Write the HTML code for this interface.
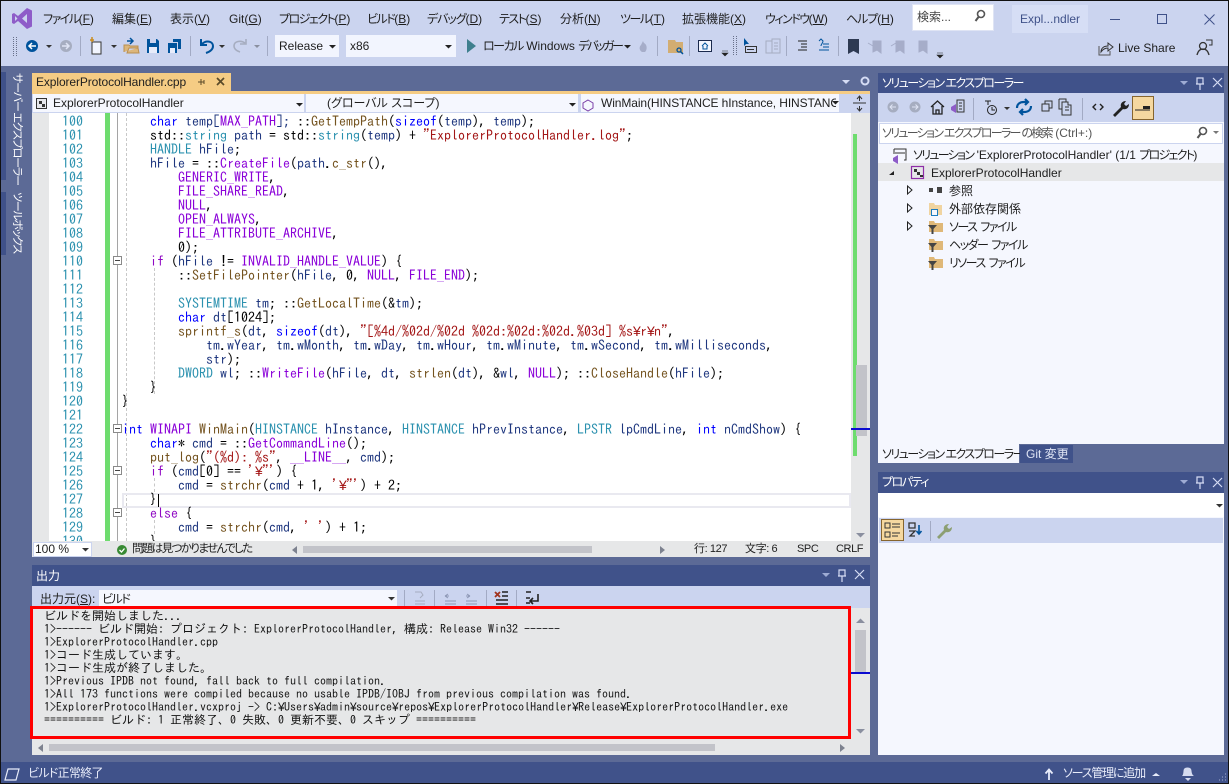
<!DOCTYPE html>
<html lang="ja"><head><meta charset="utf-8"><title>Visual Studio</title>
<style>
html,body{margin:0;padding:0}
body{width:1229px;height:784px;overflow:hidden;position:relative;background:#5c6a96;font-family:"Liberation Sans","Noto Sans CJK JP",sans-serif;font-size:12px;color:#1e1e1e;font-feature-settings:"palt"}
.a{position:absolute;white-space:nowrap}
.t{position:absolute;white-space:pre;line-height:16px;height:16px}
.m{top:11px}
.q{letter-spacing:-1.1px}
.h{letter-spacing:-1.5px}
.g{letter-spacing:-1.7px}
.code{position:absolute;left:122px;top:114px;font:14px/14px "IPAGothic",monospace;white-space:pre;color:#1f377f;font-feature-settings:normal}
.num{position:absolute;left:50px;width:33px;top:114px;text-align:right;font:14px/14px "IPAGothic",monospace;white-space:pre;color:#2b91af}
.k{color:#0000ff}.c{color:#2b91af}.f{color:#74531f}.p{color:#8a00d8}.s{color:#a31515}.x{color:#8f08c4}.d{color:#1e1e1e}.b{color:#000}
.out{position:absolute;left:44px;top:610px;font:12px/13px "IPAGothic",monospace;white-space:pre;color:#111;font-feature-settings:normal}
.y{font-family:"Liberation Sans",sans-serif;letter-spacing:-.056em}
.w{color:#fff}
.r{transform:rotate(90deg);transform-origin:0 0}
.st{font-size:11px;letter-spacing:-.4px}
</style></head><body>

<!-- top chrome -->
<div class="a" style="left:0;top:0;width:1229px;height:66px;background:#cbd4ef"></div>
<div class="t m" style="left:43px"><span class="h">ファイル</span>(<u>F</u>)</div>
<div class="t m" style="left:112px">編集(<u>E</u>)</div>
<div class="t m" style="left:170px">表示(<u>V</u>)</div>
<div class="t m" style="left:229px">Git(<u>G</u>)</div>
<div class="t m" style="left:279px"><span class="h">プロジェクト</span>(<u>P</u>)</div>
<div class="t m" style="left:367px"><span class="h">ビルド</span>(<u>B</u>)</div>
<div class="t m" style="left:427px"><span class="q">デバッグ</span>(<u>D</u>)</div>
<div class="t m" style="left:499px"><span class="h">テスト</span>(<u>S</u>)</div>
<div class="t m" style="left:560px">分析(<u>N</u>)</div>
<div class="t m" style="left:620px"><span class="h">ツール</span>(<u>T</u>)</div>
<div class="t m" style="left:682px">拡張機能(<u>X</u>)</div>
<div class="t m" style="left:765px"><span class="h">ウィンドウ</span>(<u>W</u>)</div>
<div class="t m" style="left:846px"><span class="q">ヘルプ</span>(<u>H</u>)</div>
<div class="a" style="left:912px;top:4px;width:80px;height:25px;background:#fff;border:1px solid #dfe4f4"></div>
<div class="t" style="left:917px;top:9px;color:#444">検索...</div>
<div class="a" style="left:1012px;top:5px;width:76px;height:28px;background:#d6def5"></div>
<div class="t" style="left:1020px;top:11px;color:#3f5189">Expl...ndler</div>

<!-- combos -->
<div class="a" style="left:275px;top:35px;width:64px;height:22px;background:#f2f5fe"></div>
<div class="t" style="left:279px;top:38px">Release</div>
<div class="a" style="left:346px;top:35px;width:110px;height:22px;background:#f2f5fe"></div>
<div class="t" style="left:350px;top:38px">x86</div>
<div class="t" style="left:483px;top:38px"><span class="h">ローカル</span> Windows <span style="letter-spacing:-2.400px">デバッガー</span></div>
<div class="t" style="left:1118px;top:40px">Live Share</div>

<!-- left vertical tabs -->
<div class="a" style="left:1px;top:72px;width:5px;height:108px;background:#3f5189"></div>
<div class="a" style="left:1px;top:192px;width:5px;height:63px;background:#3f5189"></div>
<div class="t w r" style="left:25px;top:73px;font-size:11px;letter-spacing:-1.200px">サーバー エクスプローラー</div>
<div class="t w r" style="left:25px;top:192px;font-size:11px;letter-spacing:-1.300px">ツールボックス</div>

<!-- doc tab -->
<div class="a" style="left:32px;top:73px;width:199px;height:18px;background:#f5cc84"></div>
<div class="t" style="left:36px;top:74px;letter-spacing:-.1px">ExplorerProtocolHandler.cpp</div>
<div class="a" style="left:32px;top:91px;width:838px;height:3px;background:#f5cc84"></div>

<!-- nav bar -->
<div class="a" style="left:32px;top:94px;width:838px;height:19px;background:#cbd4ef"></div>
<div class="a" style="left:33px;top:94px;width:271px;height:18px;background:#f5f7fe"></div>
<div class="a" style="left:306px;top:94px;width:272px;height:18px;background:#f5f7fe"></div>
<div class="a" style="left:581px;top:94px;width:258px;height:18px;background:#f5f7fe;overflow:hidden"></div>
<div class="t" style="left:53px;top:95px">ExplorerProtocolHandler</div>
<div class="t" style="left:327px;top:95px">(グローバル スコープ)</div>
<div class="a" style="left:601px;top:95px;width:235px;height:16px;overflow:hidden;white-space:pre;line-height:16px;letter-spacing:-.1px">WinMain(HINSTANCE hInstance, HINSTANCE hPrevInstance</div>

<!-- editor -->
<div class="a" style="left:32px;top:113px;width:838px;height:428px;background:#fff;overflow:hidden"></div>
<div class="a" style="left:32px;top:113px;width:17px;height:428px;background:#e6e7e8"></div>
<div class="a" style="left:851px;top:113px;width:19px;height:428px;background:#e6e7e8"></div>
<div class="a" style="left:105px;top:113px;width:5px;height:428px;background:#6edc6e"></div>
<div class="a" style="left:117px;top:113px;width:1px;height:428px;background:#a5a5a5"></div>
<div class="a" style="left:126px;top:113px;width:0;height:428px;border-left:1px dashed #c8c8c8"></div>
<div class="a" style="left:154px;top:268px;width:0;height:126px;border-left:1px dashed #c8c8c8"></div>
<div class="a" style="left:154px;top:478px;width:0;height:14px;border-left:1px dashed #c8c8c8"></div>
<div class="a" style="left:154px;top:520px;width:0;height:14px;border-left:1px dashed #c8c8c8"></div>
<div class="a" style="left:122px;top:493px;width:725px;height:11px;border:2px solid #e9e9f0"></div>
<div class="a" style="left:158px;top:494px;width:1px;height:13px;background:#000"></div>
<div class="a" style="left:853px;top:134px;width:4px;height:322px;background:#6edc6e"></div>
<div class="a" style="left:856px;top:365px;width:11px;height:71px;background:#c2c3c9"></div>
<div class="a" style="left:851px;top:428px;width:19px;height:2px;background:#0a0ad0"></div>

<div style="position:absolute;left:32px;top:113px;width:819px;height:428px;overflow:hidden">
<div class="num" style="left:18px;top:1px">100
101
102
103
104
105
106
107
108
109
110
111
112
113
114
115
116
117
118
119
120
121
122
123
124
125
126
127
128
129
130</div>
<div class="code" style="left:90px;top:1px">    <span class="k">char</span> temp[<span class="p">MAX_PATH</span>]; <span class="b">::</span><span class="f">GetTempPath</span><span class="b">(</span><span class="k">sizeof</span><span class="b">(</span>temp<span class="b">),</span> temp<span class="b">);</span>
    <span class="b">std::</span><span class="c">string</span> path <span class="b">=</span> <span class="b">std::</span><span class="c">string</span><span class="b">(</span>temp<span class="b">) +</span> <span class="s">"ExplorerProtocolHandler.log"</span><span class="b">;</span>
    <span class="c">HANDLE</span> hFile<span class="b">;</span>
    hFile <span class="b">= ::</span><span class="p">CreateFile</span><span class="b">(</span>path<span class="b">.</span><span class="f">c_str</span><span class="b">(),</span>
        <span class="p">GENERIC_WRITE</span><span class="b">,</span>
        <span class="p">FILE_SHARE_READ</span><span class="b">,</span>
        <span class="p">NULL</span><span class="b">,</span>
        <span class="p">OPEN_ALWAYS</span><span class="b">,</span>
        <span class="p">FILE_ATTRIBUTE_ARCHIVE</span><span class="b">,</span>
        <span class="b">0);</span>
    <span class="x">if</span> <span class="b">(</span>hFile <span class="b">!=</span> <span class="p">INVALID_HANDLE_VALUE</span><span class="b">) {</span>
        <span class="b">::</span><span class="f">SetFilePointer</span><span class="b">(</span>hFile<span class="b">, 0,</span> <span class="p">NULL</span><span class="b">,</span> <span class="p">FILE_END</span><span class="b">);</span>

        <span class="c">SYSTEMTIME</span> tm<span class="b">; ::</span><span class="f">GetLocalTime</span><span class="b">(&amp;</span>tm<span class="b">);</span>
        <span class="k">char</span> dt<span class="b">[1024];</span>
        <span class="f">sprintf_s</span><span class="b">(</span>dt<span class="b">,</span> <span class="k">sizeof</span><span class="b">(</span>dt<span class="b">),</span> <span class="s">"[%4d/%02d/%02d %02d:%02d:%02d.%03d] %s<span class="y">¥</span>r<span class="y">¥</span>n"</span><span class="b">,</span>
            tm<span class="b">.</span>wYear<span class="b">,</span> tm<span class="b">.</span>wMonth<span class="b">,</span> tm<span class="b">.</span>wDay<span class="b">,</span> tm<span class="b">.</span>wHour<span class="b">,</span> tm<span class="b">.</span>wMinute<span class="b">,</span> tm<span class="b">.</span>wSecond<span class="b">,</span> tm<span class="b">.</span>wMilliseconds<span class="b">,</span>
            str<span class="b">);</span>
        <span class="c">DWORD</span> wl<span class="b">; ::</span><span class="p">WriteFile</span><span class="b">(</span>hFile<span class="b">,</span> dt<span class="b">,</span> <span class="f">strlen</span><span class="b">(</span>dt<span class="b">), &amp;</span>wl<span class="b">,</span> <span class="p">NULL</span><span class="b">); ::</span><span class="f">CloseHandle</span><span class="b">(</span>hFile<span class="b">);</span>
    <span class="b">}</span>
<span class="b">}</span>

<span class="k">int</span> <span class="p">WINAPI</span> <span class="f">WinMain</span><span class="b">(</span><span class="c">HINSTANCE</span> hInstance<span class="b">,</span> <span class="c">HINSTANCE</span> hPrevInstance<span class="b">,</span> <span class="c">LPSTR</span> lpCmdLine<span class="b">,</span> <span class="k">int</span> nCmdShow<span class="b">) {</span>
    <span class="k">char</span><span class="b">*</span> cmd <span class="b">= ::</span><span class="p">GetCommandLine</span><span class="b">();</span>
    <span class="f">put_log</span><span class="b">(</span><span class="s">"(%d): %s"</span><span class="b">,</span> <span class="p">__LINE__</span><span class="b">,</span> cmd<span class="b">);</span>
    <span class="x">if</span> <span class="b">(</span>cmd<span class="b">[0] ==</span> <span class="s">'<span class="y">¥</span>"'</span><span class="b">) {</span>
        cmd <span class="b">=</span> <span class="f">strchr</span><span class="b">(</span>cmd <span class="b">+ 1,</span> <span class="s">'<span class="y">¥</span>"'</span><span class="b">) + 2;</span>
    <span class="b">}</span>
    <span class="x">else</span> <span class="b">{</span>
        cmd <span class="b">=</span> <span class="f">strchr</span><span class="b">(</span>cmd<span class="b">,</span> <span class="s">' '</span><span class="b">) + 1;</span>
    <span class="b">}</span></div>
</div>

<!-- editor status -->
<div class="a" style="left:32px;top:541px;width:838px;height:16px;background:#e6e7e8"></div>
<div class="a" style="left:33px;top:542px;width:57px;height:13px;background:#fff;border:1px solid #cbd4ef"></div>
<div class="t" style="left:35px;top:541px">100 %</div>
<div class="t" style="left:132px;top:541px;font-size:11.5px;letter-spacing:-1.6px">問題は見つかりませんでした</div>
<div class="a" style="left:303px;top:546px;width:289px;height:7px;background:#c2c3c9"></div>
<div class="t st" style="left:694px;top:541px">行: 127</div>
<div class="t st" style="left:745px;top:541px">文字: 6</div>
<div class="t st" style="left:797px;top:541px">SPC</div>
<div class="t st" style="left:836px;top:541px">CRLF</div>

<!-- output panel -->
<div class="a" style="left:32px;top:565px;width:838px;height:21px;background:#40528a"></div>
<div class="t w" style="left:36px;top:568px">出力</div>
<div class="a" style="left:32px;top:586px;width:838px;height:22px;background:#cbd4ef"></div>
<div class="t" style="left:40px;top:591px">出力元(<u>S</u>):</div>
<div class="a" style="left:99px;top:590px;width:298px;height:18px;background:#f5f7fe"></div>
<div class="t h" style="left:102px;top:591px">ビルド</div>
<div class="a" style="left:32px;top:608px;width:838px;height:147px;background:#e6e7e8"></div>
<div class="a" style="left:855px;top:630px;width:11px;height:42px;background:#c2c3c9"></div>
<div class="a" style="left:851px;top:672px;width:19px;height:2px;background:#0a0ad0"></div>
<div class="a" style="left:49px;top:744px;width:666px;height:7px;background:#c2c3c9"></div>
<div class="out">ビルドを開始しました...
1&gt;------ ビルド開始: プロジェクト: ExplorerProtocolHandler, 構成: Release Win32 ------
1&gt;ExplorerProtocolHandler.cpp
1&gt;コード生成しています。
1&gt;コード生成が終了しました。
1&gt;Previous IPDB not found, fall back to full compilation.
1&gt;All 173 functions were compiled because no usable IPDB/IOBJ from previous compilation was found.
1&gt;ExplorerProtocolHandler.vcxproj -&gt; C:<span class="y">¥</span>Users<span class="y">¥</span>admin<span class="y">¥</span>source<span class="y">¥</span>repos<span class="y">¥</span>ExplorerProtocolHandler<span class="y">¥</span>Release<span class="y">¥</span>ExplorerProtocolHandler.exe
========== ビルド: 1 正常終了、0 失敗、0 更新不要、0 スキップ ==========</div>
<div class="a" style="left:30px;top:606px;width:815px;height:127px;border:3px solid #ff0000"></div>

<!-- solution explorer -->
<div class="a" style="left:878px;top:73px;width:346px;height:20px;background:#40528a"></div>
<div class="t w h" style="left:882px;top:75px">ソリューション エクスプローラー</div>
<div class="a" style="left:878px;top:93px;width:346px;height:29px;background:#cbd4ef"></div>
<div class="a" style="left:878px;top:122px;width:346px;height:322px;background:#f5f7fe"></div>
<div class="a" style="left:879px;top:123px;width:342px;height:19px;background:#fff;border:1px solid #cbd4ef"></div>
<div class="t" style="left:882px;top:125px;color:#555"><span class="g">ソリューション エクスプローラー の検索</span> (Ctrl+:)</div>
<div class="t" style="left:913px;top:147px"><span class="g">ソリューション</span> 'ExplorerProtocolHandler' (1/1 <span class="g">プロジェクト</span>)</div>
<div class="a" style="left:878px;top:163px;width:346px;height:18px;background:#e6e7e8"></div>
<div class="t" style="left:931px;top:165px">ExplorerProtocolHandler</div>
<div class="t" style="left:949px;top:183px">参照</div>
<div class="t" style="left:949px;top:201px">外部依存関係</div>
<div class="t h" style="left:949px;top:219px;word-spacing:2px">ソース ファイル</div>
<div class="t h" style="left:949px;top:237px;word-spacing:2px">ヘッダー ファイル</div>
<div class="t h" style="left:949px;top:255px;word-spacing:2px">リソース ファイル</div>
<div class="a" style="left:878px;top:444px;width:141px;height:19px;background:#f5f7fe"></div>
<div class="t h" style="left:882px;top:446px">ソリューション エクスプローラー</div>
<div class="a" style="left:1020px;top:445px;width:53px;height:18px;background:#40528a"></div>
<div class="t" style="left:1026px;top:446px;color:#dfe4f4">Git 変更</div>

<!-- properties -->
<div class="a" style="left:878px;top:472px;width:346px;height:21px;background:#40528a"></div>
<div class="t w" style="left:882px;top:474px;letter-spacing:-1.500px">プロパティ</div>
<div class="a" style="left:878px;top:493px;width:346px;height:262px;background:#f5f7fe"></div>
<div class="a" style="left:878px;top:493px;width:346px;height:24px;background:#fff"></div>
<div class="a" style="left:879px;top:518px;width:344px;height:25px;background:#cbd4ef"></div>

<!-- status bar -->
<div class="a" style="left:0;top:762px;width:1229px;height:21px;background:#40528a"></div>
<div class="t" style="left:28px;top:765px;color:#e8ecfa;letter-spacing:-.7px">ビルド正常終了</div>
<div class="t" style="left:1063px;top:765px;color:#e8ecfa;letter-spacing:-1.2px">ソース管理に追加</div>

<!-- icons -->
<svg class="a" style="left:0;top:0" width="1229" height="784" viewBox="0 0 1229 784" fill="none">
<!-- window border -->
<rect x=".5" y=".5" width="1228" height="783" stroke="#111"/>
<!-- VS logo -->
<path d="M27 8l5 2.500v16L27 29l-9-8-4 3-2-1V14l2-1 4 3zM15 16v5l2.500-2.500zM27 14l-5 4.500 5 4.500z" fill="#8e5cc8" fill-rule="evenodd"/>
<!-- search icon -->
<circle cx="981" cy="14" r="3.500" stroke="#555" stroke-width="1.600"/><path d="M978.500 17l-3 4" stroke="#555" stroke-width="2"/>
<!-- window controls -->
<path d="M1110 19.500h10" stroke="#3f5189"/><rect x="1157.500" y="14.500" width="9" height="9" stroke="#3f5189"/><path d="M1204.500 14.500l10 10m0-10l-10 10" stroke="#3f5189"/>
<!-- toolbar grip -->
<path d="M13.500 37v20M16.500 37v20" stroke="#68708a" stroke-dasharray="1 1"/>
<!-- back/forward -->
<circle cx="32" cy="46" r="6" fill="#00539c"/><path d="M36 46h-7m3-3l-3 3 3 3" stroke="#fff" stroke-width="1.500"/>
<path d="M46 45h6l-3 3z" fill="#333"/>
<circle cx="66" cy="46" r="6" fill="#a6adc0"/><path d="M62 46h7m-3-3l3 3-3 3" stroke="#dfe4f4" stroke-width="1.500"/>
<path d="M80.500 36v20M190.500 36v20M267.500 36v20" stroke="#a2aac4"/>
<!-- new project -->
<path d="M92 42h9v12h-9z" stroke="#333" fill="#f2f5fe"/><path d="M90 40l4 0m-2-3v5" stroke="#c98b1e" stroke-width="1.500"/><path d="M111 45h6l-3 3z" fill="#333"/>
<!-- open -->
<path d="M124 52v-7h5l1 1h8v2h-9l-2 5h12l-1-5" fill="#dcb67a" stroke="#b98f50"/><path d="M127 41h5m-2-3l3 3-3 3" stroke="#00539c" stroke-width="1.500"/>
<!-- save -->
<path d="M147 39h10l2 2v12h-12z" fill="#00539c"/><rect x="150" y="39" width="6" height="4" fill="#cbd4ef"/><rect x="149" y="47" width="8" height="6" fill="#e8ecfa"/>
<path d="M168 43h9v10h-9z" fill="#00539c"/><rect x="170" y="48" width="5" height="5" fill="#e8ecfa"/><path d="M173 39h8v10h-3v-7h-5z" fill="#00539c"/>
<!-- undo/redo -->
<path d="M201 39v6h6M202 44c4-4 11-3 11 2 0 4-4 6-7 7" stroke="#00539c" stroke-width="2"/><path d="M219 45h6l-3 3z" fill="#333"/>
<path d="M246 39v5h-6M245 43c-4-3-11-2-11 3 0 3 3 5 6 6" stroke="#a6adc0" stroke-width="1.600"/><path d="M254 45h6l-3 3z" fill="#8a8f9f"/>
<!-- combos arrows -->
<path d="M329 45h7l-3.500 3.500zM445 45h7l-3.500 3.500zM624 45h7l-3.500 3.500zM296 103h7l-3.500 3.500zM569 103h7l-3.500 3.500zM832 101h7l-3.500 3.500z" fill="#222"/>
<path d="M467 39v14l9-7z" fill="#3e7f8e"/>
<!-- hot reload -->
<path d="M642 52c-3-2-3-5-1-7l2-4c1 3 2 2 3 4s1 5-1 7z" fill="#a6adc9"/>
<path d="M657.500 36v20M689.500 36v20" stroke="#a2aac4"/>
<path d="M668 40h7l1 2h7v11h-15z" fill="#d2ad72"/><circle cx="679" cy="50" r="2" stroke="#00539c" stroke-width="1.300"/><path d="M680.500 51.500l2.500 2.500" stroke="#00539c" stroke-width="1.500"/>
<rect x="698.500" y="40.500" width="13" height="11" stroke="#1b2a4d" fill="#f2f5fe"/><path d="M702 46l3-3 3 3m-5 0v3h4v-3" stroke="#00539c"/>
<path d="M722 51h6M722 53h6l-3 3z" fill="#222" stroke="#222" stroke-width=".6"/>
<path d="M733.500 36v20M736.500 36v20" stroke="#68708a" stroke-dasharray="1 1"/>
<path d="M744 38v8l2-2 3 0z" fill="#00539c"/><rect x="745.500" y="46.500" width="11" height="6" stroke="#333"/><path d="M747 49.500h7" stroke="#333"/>
<path d="M766 41h6v12h-6zM772 39h8v14h-8zM774 43h4M774 46h4M774 49h4" stroke="#a6adc0"/>
<path d="M786.500 36v20" stroke="#a2aac4"/>
<path d="M798 41h9M801 44h6M801 47h6M798 50h9" stroke="#222"/>
<path d="M819 41l2-2 2 2c0 2-2 3-2 5M823 44h6M823 47h6M819 50h10" stroke="#00539c"/>
<path d="M838.500 36v20" stroke="#a2aac4"/>
<path d="M848 39h11v15l-5.500-3-5.500 3z" fill="#2e3a52"/>
<path d="M873 41h8v12l-4-3-4 2zM868 43l5 3M896 41h8v12l-4-3-4 2zM891 46l5-3M919 41h8v12l-4-3-4 2z" fill="#a6adc9" stroke="#a6adc9"/>
<path d="M937 53h6M937 55h6l-3 3z" fill="#222" stroke="#222" stroke-width=".6"/>
<!-- live share -->
<path d="M1099 46v9h11v-4" stroke="#555"/><path d="M1101 52c0-4 3-6 7-6v-3l5 4-5 4v-3c-3 0-5 1-7 4z" stroke="#333"/>
<circle cx="1203" cy="46" r="3.500" stroke="#333" stroke-width="1.300"/><path d="M1197 55c1-4 3-6 6-6s5 2 6 6" stroke="#333" stroke-width="1.300"/><path d="M1206 40h6v5h-3" stroke="#333"/>
<!-- tab pin & close -->
<path d="M198 82h6M201 79v6M204 80v4" stroke="#5a4a28"/><path d="M217 78l7 7m0-7l-7 7" stroke="#5a4a28" stroke-width="1.700"/>
<!-- tab well -->
<path d="M842 80h8l-4 4z" fill="#d5dcf4"/><circle cx="865" cy="81" r="3.500" stroke="#d5dcf4" stroke-width="2"/>
<!-- nav icons -->
<rect x="36.500" y="98.500" width="10" height="10" stroke="#333" fill="#e6e7ec"/><path d="M39 101h3v3h3v3h-3v-3h-3z" fill="#333"/>
<path d="M588 100l5 3v5l-5 3-5-3v-5z" stroke="#7a3fa8"/>
<path d="M853 103h13M859.500 97v4m0 5v5M857 99l2.500-3 2.500 3M857 108l2.500 3 2.500-3" stroke="#333"/>
<!-- editor scroll arrows -->
<path d="M856 533h9l-4.500 4.500z" fill="#8a8f9f"/>
<path d="M297 546v8l-5-4zM660 546v8l5-4z" fill="#7d828f"/>
<path d="M82 548h7l-3.500 3.500z" fill="#333"/>
<circle cx="122" cy="550" r="5" fill="#388a34"/><path d="M119.500 550l2 2 3-3.500" stroke="#fff" stroke-width="1.300"/>
<!-- fold boxes -->
<g stroke="#8a8a8a" fill="#fff"><rect x="113.500" y="256.500" width="8" height="8"/><rect x="113.500" y="424.500" width="8" height="8"/><rect x="113.500" y="466.500" width="8" height="8"/><rect x="113.500" y="508.500" width="8" height="8"/></g>
<path d="M115 260.500h5M115 428.500h5M115 470.500h5M115 512.500h5" stroke="#444"/>
<!-- output toolbar -->
<path d="M822 573h8l-4 4zM1180 81h8l-4 4zM1180 480h8l-4 4z" fill="#9eabd4"/>
<g stroke="#d5dcf4" stroke-width="1.200"><path d="M839 570h6v6h-6zM838 576h8M842 576v6"/><path d="M1197 78h6v6h-6zM1196 84h8M1200 84v6"/><path d="M1197 477h6v6h-6zM1196 483h8M1200 483v6"/><path d="M855 570l9 9m0-9l-9 9M1213 78l9 9m0-9l-9 9M1213 478l9 9m0-9l-9 9"/></g>
<path d="M388 597h7l-3.500 3.500z" fill="#333"/>
<path d="M404.500 590v16M434.500 590v16M486.500 590v16M516.500 590v16" stroke="#a2aac4"/>
<path d="M415 592h6l2 3-3 3M415 601h10M415 604h10" stroke="#a6adc0"/>
<path d="M445 596h4m-4 0l3-2m-3 2l3 2M445 601h11M445 604h11M466 596h4m0 0l-3-2m3 2l-3 2M466 601h11M466 604h11" stroke="#8d97b5"/>
<path d="M495 592l5 5m0-5l-5 5" stroke="#a1331e" stroke-width="1.800"/><path d="M502 592h6M502 596h6M496 600h12M496 604h12" stroke="#222" stroke-width="1.400"/>
<path d="M526 592h5M526 598h4M526 603h4" stroke="#222" stroke-width="1.500"/><path d="M538 594v7h-8m3-3l-3 3 3 3" stroke="#222" stroke-width="1.600"/>
<!-- output scrollbar arrows -->
<path d="M856 623l4.500-4.500 4.500 4.500z" fill="#8a8f9f"/><path d="M856 729h9l-4.500 4.500z" fill="#8a8f9f"/>
<path d="M43 744v8l-5-4zM840 744v8l5-4z" fill="#7d828f"/>
<!-- explorer toolbar -->
<circle cx="893" cy="107" r="5.500" fill="#a6adc0"/><path d="M896 107h-6m2.500-2.500L890 107l2.500 2.500" stroke="#dfe4f4"/>
<circle cx="915" cy="107" r="5.500" fill="#a6adc0"/><path d="M912 107h6m-2.500-2.500L918 107l-2.500 2.500" stroke="#dfe4f4"/>
<path d="M931 107l6.500-6 6.500 6M933 106v8h9v-8M936 114v-4h3v4" stroke="#222" stroke-width="1.300"/>
<path d="M957 100h7v12h-7zM959 103h3M959 106h3M959 109h3" stroke="#333"/><path d="M951 107l5-3v9l-5-3z" fill="#8e5cc8"/>
<path d="M973.500 98v22M1082.500 98v22" stroke="#a2aac4"/>
<path d="M985 101h6M988 101v4" stroke="#222"/><circle cx="992" cy="110" r="4.500" stroke="#222"/><path d="M992 107v3h3" stroke="#222"/>
<path d="M1004 107h6l-3 3z" fill="#333"/>
<path d="M1017 108c0-4 3-6 7-6h3m-2-3l3 3-3 3M1031 106c0 4-3 6-7 6h-3m2 3l-3-3 3-3" stroke="#00539c" stroke-width="2.200"/>
<path d="M1042 104h7v7h-7zM1045 104v-3h7v7h-3" stroke="#333"/>
<path d="M1062 102h6v3h3v10h-9zM1065 107h4M1065 110h4M1059 99h7v3M1059 99v10h3" stroke="#333"/>
<path d="M1096 104l-3 3 3 3M1100 104l3 3-3 3" stroke="#222" stroke-width="1.400"/>
<path d="M1113 115l8-8c-1-3 1-6 5-6l-2 3 2 2 3-2c0 4-3 6-6 5l-8 8z" fill="#222"/>
<rect x="1132.500" y="96.500" width="21" height="23" fill="#f5d8a0" stroke="#86652f"/><path d="M1135 110h15" stroke="#222"/><rect x="1143" y="106" width="7" height="3" fill="#222"/>
<circle cx="1203" cy="131" r="3.500" stroke="#555" stroke-width="1.600"/><path d="M1200.500 134l-3 4" stroke="#555" stroke-width="2"/><path d="M1213 131h6l-3 3z" fill="#777"/>
<!-- tree icons -->
<path d="M894 149h12v11h-2M894 149v3" stroke="#333"/><path d="M893 153h12" stroke="#333"/><path d="M893 158l5-3v9l-5-3z" fill="#8e5cc8"/>
<path d="M889 175l5-4v4z" fill="#222"/>
<rect x="911.500" y="166.500" width="12" height="12" stroke="#8e2ea8" stroke-width="1.200"/><path d="M914 169h3v3h3v3h3v2h-3v-2h-3v-3h-3z" fill="#333"/>
<path d="M907.500 186v8l4.500-4zM907.500 204v8l4.500-4zM907.500 222v8l4.500-4z" stroke="#222"/>
<path d="M929 188h4v4h-4zM934 190h2M937 187h5v6h-5z" fill="#444"/>
<path d="M929 203h5l1 2h7v10h-13z" fill="#f0d4a0"/><rect x="931.500" y="209.500" width="6" height="6" fill="#f5f7fe" stroke="#1c7cc0"/>
<g fill="#dfb878"><path d="M929 221h5l1 2h8v9h-14zM929 239h5l1 2h8v9h-14zM929 257h5l1 2h8v9h-14z"/></g>
<g fill="#444"><path d="M928 225h9l-3.500 4v5h-2v-5zM928 243h9l-3.500 4v5h-2v-5zM928 261h9l-3.500 4v5h-2v-5z"/></g>
<!-- properties toolbar -->
<path d="M1216 504h7l-3.500 3.500z" fill="#333"/>
<rect x="881.500" y="519.500" width="22" height="21" fill="#f5d8a0" stroke="#86652f"/>
<path d="M885 523h5v5h-5zM885 532h5v5h-5zM892 524h8M892 527h8M892 533h8M892 536h6" stroke="#333"/>
<path d="M909 523h6v5h-6zM909 531h6l-5 5h5" stroke="#333" stroke-width="1.300"/><path d="M919 525v9m-2.500-3l2.500 3 2.500-3" stroke="#00539c" stroke-width="1.600"/>
<path d="M930.500 521v20" stroke="#a2aac4"/>
<path d="M937 537l7-7c-1-3 1-6 5-6l-2 3 2 2 3-2c0 4-3 6-6 5l-7 7z" fill="#8c9f72"/>
<!-- status bar icons -->
<path d="M8 769h11l-3 11H5z" stroke="#e8ecfa" stroke-width="1.200"/>
<path d="M1049 780v-10m-3.500 3.500l3.500-4 3.500 4" stroke="#e8ecfa" stroke-width="1.800"/>
<path d="M1152 776l4-3 4 3z" fill="#e8ecfa"/>
<path d="M1182 776c2-2 1-5 2-7 1-2 6-2 7 0 1 2 0 5 3 7zM1185 778h6l-3 3z" fill="#d5dbef"/>
<path d="M1225 780h1M1222 780h1M1219 780h1M1225 777h1M1222 777h1M1225 774h1" stroke="#a5aed0"/>
</svg>
</body></html>
